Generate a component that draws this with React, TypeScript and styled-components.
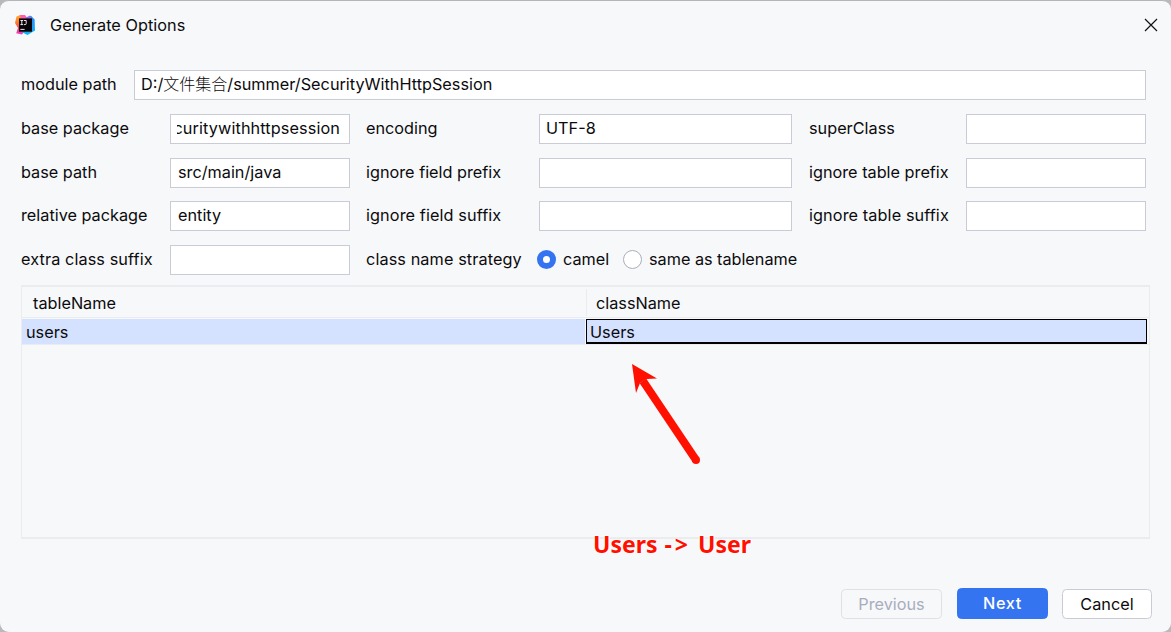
import React from "react";
import styled, { createGlobalStyle } from "styled-components";

const GlobalStyle = createGlobalStyle`
  * { box-sizing: border-box; }
  html, body { margin: 0; padding: 0; background: #b9b9bb; overflow: hidden; }
  body { font-family: "Inter", "Noto Sans CJK SC", sans-serif; font-size: 16.25px; color: #0b0b0d; }
`;

const Dialog = styled.main`
  position: relative;
  display: flex;
  flex-direction: column;
  width: 1171px;
  height: 632px;
  border-top: 1px solid #b4b5b8;
  border-radius: 9px;
  background: #f7f8fa;
  overflow: hidden;
`;

const TitleBar = styled.header`
  display: flex;
  align-items: center;
  height: 48px;
  padding: 0 13px 0 15px;
`;

const Title = styled.h1`
  flex: 1;
  margin: 0 0 0 15px;
  font-size: inherit;
  font-weight: 400;
  line-height: 20px;
  letter-spacing: 0.04px;
`;

const CloseButton = styled.button`
  display: flex;
  padding: 0;
  border: 0;
  background: none;
`;

const Form = styled.form`
  display: flex;
  flex-direction: column;
  gap: 14px;
  padding: 21px 25px 0 21px;
`;

const PathRow = styled.div`
  display: grid;
  grid-template-columns: 113px 1fr;
  align-items: center;
`;

const OptionGrid = styled.div`
  display: grid;
  grid-template-columns: 149px 180px 16px 173px 253px 17px 157px 180px;
  grid-auto-rows: 30px;
  row-gap: 13.6px;
  align-items: center;
`;

const Label = styled.label<{ $col?: number; $loose?: boolean }>`
  grid-column: ${(p) => p.$col ?? "auto"};
  padding-bottom: 2px;
  line-height: 20px;
  letter-spacing: ${(p) => (p.$loose ? 0.1 : 0)}px;
  white-space: nowrap;
`;

const Field = styled.div<{ $clipped?: boolean; $inset?: number }>`
  display: flex;
  align-items: center;
  justify-content: ${(p) => (p.$clipped ? "flex-end" : "flex-start")};
  height: 30px;
  padding: 0 ${(p) => (p.$clipped ? 9 : 7)}px 2px ${(p) => p.$inset ?? 6}px;
  border: 1px solid #c9ccd6;
  background: #fff;
`;

const Value = styled.span<{ $loose?: boolean }>`
  display: flex;
  justify-content: inherit;
  overflow: hidden;
  line-height: 22px;
  letter-spacing: ${(p) => (p.$loose ? 0.1 : 0)}px;
  white-space: nowrap;
`;

const Han = styled.span`
  font-size: 16px;
  font-weight: 300;
`;

const RadioGroup = styled.div`
  display: flex;
  align-items: center;
  grid-column: 5 / 8;
  margin-left: -2px;
`;

const Option = styled.label`
  display: flex;
  align-items: center;
  gap: 7px;
  margin-right: 14px;
  line-height: 20px;
  white-space: nowrap;
`;

const OptionText = styled.span`
  padding-bottom: 2px;
  letter-spacing: -0.03px;
`;

const Radio = styled.span<{ $checked?: boolean }>`
  width: 19px;
  height: 19px;
  border: ${(p) => (p.$checked ? "6.25px solid #3574f0" : "1.25px solid #a9adbd")};
  border-radius: 50%;
  background: #fff;
`;

const Table = styled.section`
  height: 254px;
  margin: 10.2px 21px 0 21px;
  border: 1px solid #ebecf0;
  border-width: 2px 1px;
`;

const HeaderRow = styled.div`
  display: grid;
  grid-template-columns: 564px 1fr;
  height: 31px;
  border-bottom: 1px solid #ebecf0;
`;

const HeaderCell = styled.div<{ $divided?: boolean }>`
  display: flex;
  align-items: center;
  margin: 2px 0 1px;
  padding: 1px 0 0 ${(p) => (p.$divided ? 9 : 11)}px;
  border-left: ${(p) => (p.$divided ? "1px solid #ebecf0" : "0")};
`;

const BodyRow = styled.div`
  display: grid;
  grid-template-columns: 563px 561px;
  column-gap: 1px;
  height: 26px;
  margin-top: 1px;
  border-bottom: 1px solid #ebecf0;
`;

const Cell = styled.div<{ $focused?: boolean }>`
  display: flex;
  align-items: center;
  padding: ${(p) => (p.$focused ? "2px 0 0 3px" : "1px 0 0 4px")};
  border: ${(p) => (p.$focused ? "solid #000" : "0")};
  border-width: ${(p) => (p.$focused ? "1px 1px 2px" : "0")};
  background: #d4e2ff;
`;

const Footer = styled.footer`
  display: flex;
  align-items: flex-end;
  justify-content: flex-end;
  padding: 49px 19px 0 0;
`;

const Button = styled.button<{ $kind?: "primary" | "disabled"; $width: number }>`
  width: ${(p) => p.$width}px;
  height: ${(p) => (p.$kind === "primary" ? 31 : 30)}px;
  margin-right: ${(p) => (p.$kind === "primary" ? 14 : p.$kind === "disabled" ? 15 : 0)}px;
  padding: 0;
  border: 1px solid ${(p) => (p.$kind === "primary" ? "#3574f0" : p.$kind === "disabled" ? "#dfe1e7" : "#c9ccd6")};
  border-radius: 4.5px;
  background: ${(p) => (p.$kind === "primary" ? "#3574f0" : p.$kind === "disabled" ? "#f7f8fa" : "#fff")};
  color: ${(p) => (p.$kind === "primary" ? "#fff" : p.$kind === "disabled" ? "#a8adbd" : "#0b0b0d")};
  font: inherit;
  font-weight: ${(p) => (p.$kind === "primary" ? 500 : 400)};
  letter-spacing: ${(p) => (p.$kind === "primary" ? 0.6 : 0)}px;
`;

const Arrow = styled.svg`
  position: absolute;
  left: 626px;
  top: 359px;
`;

const Note = styled.div`
  position: absolute;
  left: 593px;
  top: 527px;
  color: #ff1000;
  font: 700 23px/32px "Noto Sans", sans-serif;
  word-spacing: 1px;
  white-space: pre;
  text-shadow: 1px 0 #fff, -1px 0 #fff, 0 1px #fff, 0 -1px #fff;
`;

const NoteArrow = styled.span`
  letter-spacing: 3px;
`;

const AppLogo = () => (
  <svg width="20" height="20" viewBox="0 0 20 20">
    <defs>
      <linearGradient id="warm" x1="0" y1="0" x2="0.1" y2="1">
        <stop offset="0" stopColor="#ffb22e" />
        <stop offset="0.4" stopColor="#ff7a2c" />
        <stop offset="0.7" stopColor="#ff3a6e" />
        <stop offset="1" stopColor="#f03cc0" />
      </linearGradient>
      <linearGradient id="cool" x1="0" y1="0" x2="0" y2="1">
        <stop offset="0" stopColor="#2f86f6" />
        <stop offset="1" stopColor="#0fb6f6" />
      </linearGradient>
    </defs>
    <path d="M1.5 1.5 5 0 12 3 11 14 7 19.5 1.2 18.3 3 13 0 8z" fill="url(#warm)" />
    <path d="M5 0H10L13 4H6z" fill="#fb5fae" />
    <path d="M16 .8 19.6 4.5 20 15.5 12.5 20 6.5 17 12 3z" fill="url(#cool)" />
    <path d="M11 2.4 15 .5 16.5 4H11z" fill="#8f6fe8" />
    <rect x="4" y="3.4" width="13" height="13.3" fill="#090407" />
    <path d="M5.4 5.5h2.8M6.8 5.5v4.2M5.4 9.6h2.8M9 5.5h2.2v3.1q0 1-1 1H9M5.4 14.4h4.2" fill="none" stroke="#fff" strokeWidth="0.9" />
  </svg>
);

export default function App() {
  return (
    <>
      <GlobalStyle />
      <Dialog>
        <TitleBar>
          <AppLogo />
          <Title>Generate Options</Title>
          <CloseButton type="button" aria-label="Close">
            <svg width="14" height="14" viewBox="0 0 14 14">
              <path d="M1 1l12 12M13 1L1 13" stroke="#111" strokeWidth="1.2" />
            </svg>
          </CloseButton>
        </TitleBar>
        <Form>
          <PathRow>
            <Label>module path</Label>
            <Field><Value>D:/<Han>文件集合</Han>/summer/SecurityWithHttpSession</Value></Field>
          </PathRow>
          <OptionGrid>
            <Label>base package</Label>
            <Field $clipped><Value $loose>curitywithhttpsession</Value></Field>
            <Label $col={4}>encoding</Label>
            <Field><Value>UTF-8</Value></Field>
            <Label $col={7}>superClass</Label>
            <Field />
            <Label>base path</Label>
            <Field $inset={7}><Value>src/main/java</Value></Field>
            <Label $col={4}>ignore field prefix</Label>
            <Field />
            <Label $col={7}>ignore table prefix</Label>
            <Field />
            <Label>relative package</Label>
            <Field $inset={7}><Value>entity</Value></Field>
            <Label $col={4} $loose>ignore field suffix</Label>
            <Field />
            <Label $col={7} $loose>ignore table suffix</Label>
            <Field />
            <Label $loose>extra class suffix</Label>
            <Field />
            <Label $col={4} $loose>class name strategy</Label>
            <RadioGroup>
              <Option><Radio $checked /><OptionText>camel</OptionText></Option>
              <Option><Radio /><OptionText>same as tablename</OptionText></Option>
            </RadioGroup>
          </OptionGrid>
        </Form>
        <Table>
          <HeaderRow>
            <HeaderCell>tableName</HeaderCell>
            <HeaderCell $divided>className</HeaderCell>
          </HeaderRow>
          <BodyRow>
            <Cell>users</Cell>
            <Cell $focused>Users</Cell>
          </BodyRow>
        </Table>
        <Footer>
          <Button type="button" $kind="disabled" $width={101}>Previous</Button>
          <Button type="button" $kind="primary" $width={91}>Next</Button>
          <Button type="button" $width={90}>Cancel</Button>
        </Footer>
        <Arrow width="80" height="110" viewBox="0 0 80 110">
          <path d="M17 21 70 100" stroke="#ff1000" strokeWidth="8" strokeLinecap="butt" />
          <circle cx="70" cy="100" r="4" fill="#ff1000" />
          <path d="M6 4 31 18.5 21 19 14 23 10 33z" fill="#ff1000" />
        </Arrow>
        <Note>Users <NoteArrow>{"->"}</NoteArrow> User</Note>
      </Dialog>
    </>
  );
}
